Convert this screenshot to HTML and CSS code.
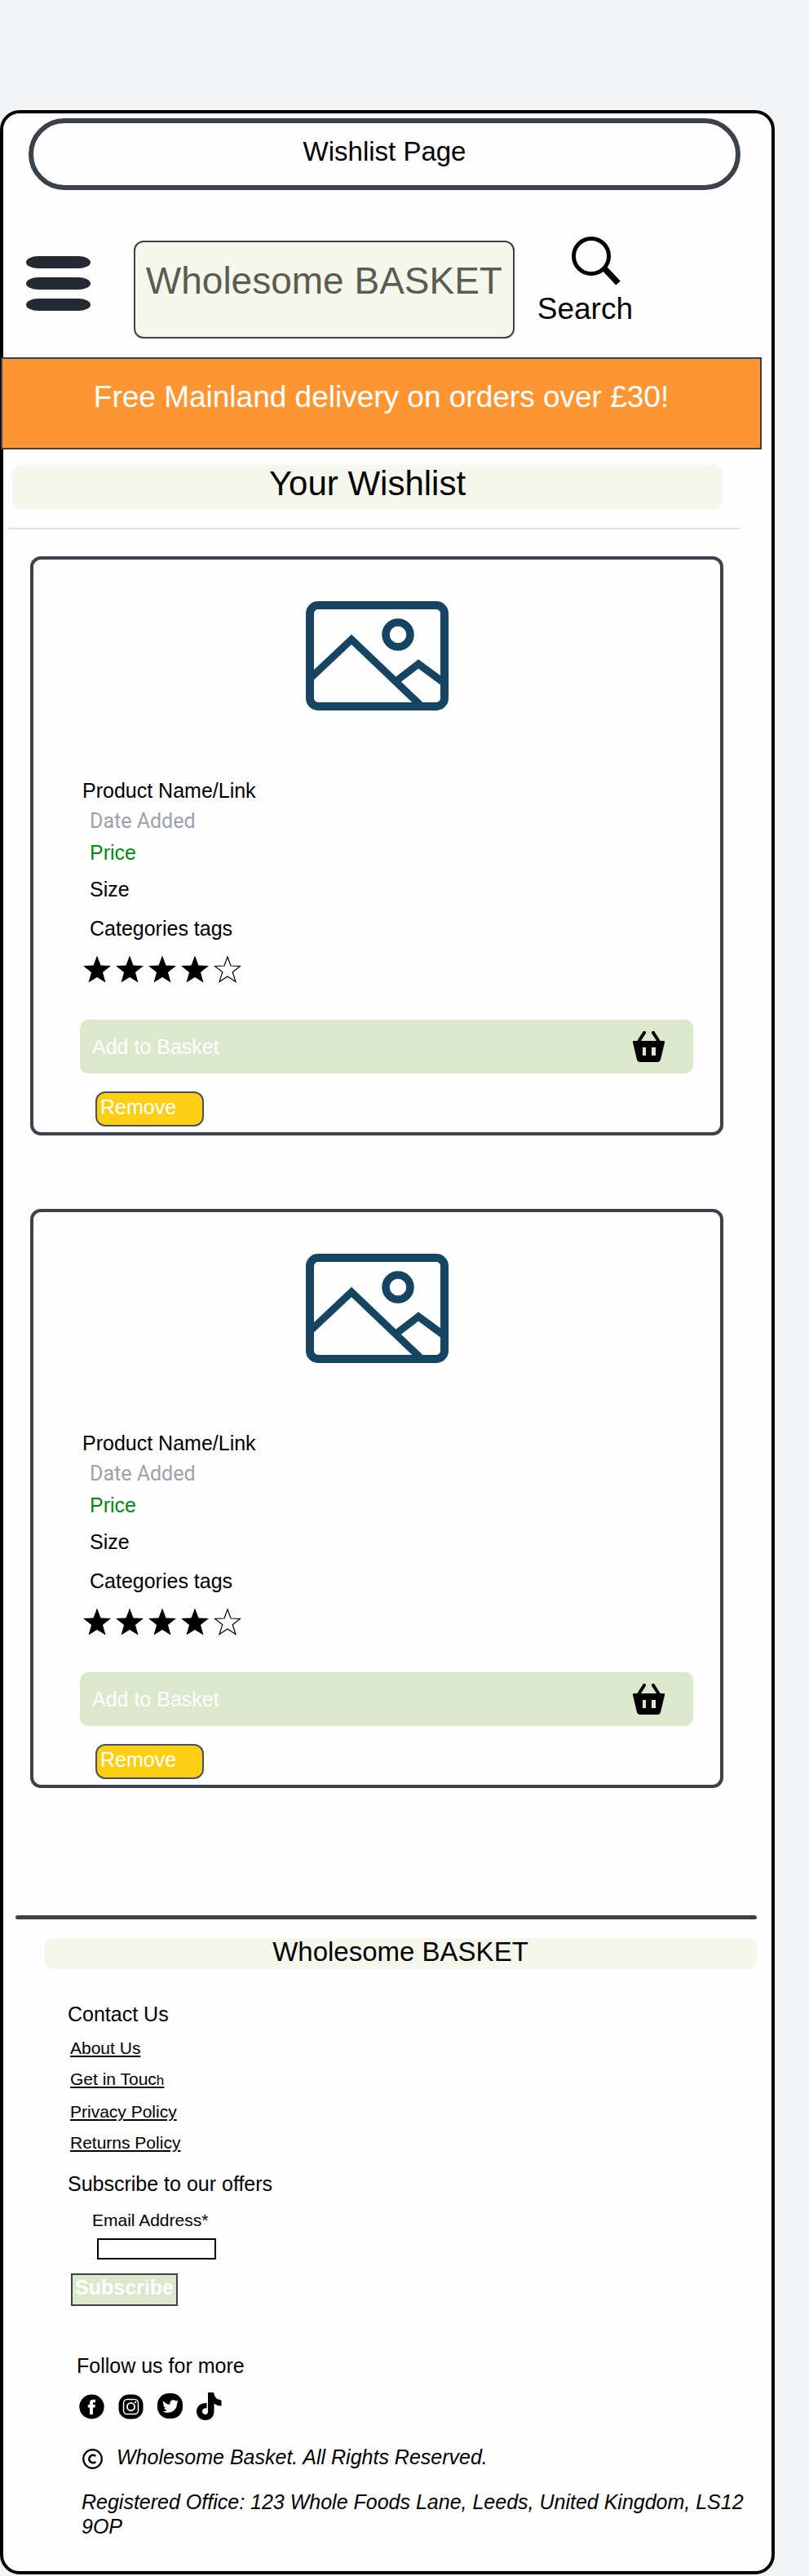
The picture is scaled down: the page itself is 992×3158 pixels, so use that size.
FILE: index.html
```html
<!DOCTYPE html>
<html lang="en">
<head>
  <meta charset="utf-8">
  <meta name="viewport" content="width=device-width, initial-scale=1">
  <title>Wishlist Page</title>
  <link rel="stylesheet" href="styles.css">
</head>
<body>
  <!-- Shared icon shapes -->
  <svg class="sprite" aria-hidden="true">
    <symbol id="icon-picture" viewBox="0 0 175 134">
      <g fill="none" stroke="#164563">
        <rect x="5" y="5" width="165" height="124" rx="10" stroke-width="10"/>
        <circle cx="113" cy="41" r="15" stroke-width="9.5"/>
        <path d="M6 94 56 47 140 127M112 97 138 77 168 99" stroke-width="9"/>
      </g>
    </symbol>
    <symbol id="icon-star" viewBox="0 0 34 33">
      <path d="M17 0 21.500 12 34 12.500 24 20.500 27.500 33 17 26.500 6.500 33 10 20.500 0 12.500 12.500 12Z"/>
    </symbol>
    <symbol id="icon-star-empty" viewBox="0 0 34 33">
      <path d="M17 1.500 21 12.500 32.500 13 23.200 20.200 27 32 17 25.500 7 32 10.800 20.200 1.500 13 13 12.500Z" fill="none" stroke="#000" stroke-width="1.200"/>
    </symbol>
    <symbol id="icon-basket" viewBox="0 0 39 38">
      <path d="M7 13 14 2M32 13 25 2" fill="none" stroke="#000" stroke-width="4" stroke-linecap="round"/>
      <path fill-rule="evenodd" d="M1 12H38Q39.500 12 39 14L34 35Q33 38 30 38H9Q6 38 5 35L0 14Q-.5 12 1 12ZM12 20V30H16V20ZM23 20V30H28V20Z"/>
    </symbol>
  </svg>

  <div class="frame">
    <h1 class="page-name">Wishlist Page</h1>

    <header class="header">
      <button class="menu" type="button" aria-label="Menu">
        <span class="menu-bar"></span>
        <span class="menu-bar"></span>
        <span class="menu-bar"></span>
      </button>
      <a class="brand" href="#">Wholesome BASKET</a>
      <button class="search" type="button">
        <svg class="search-icon" viewBox="0 0 62 62" aria-hidden="true">
          <circle cx="25" cy="25" r="21.500" fill="none" stroke="#000" stroke-width="5"/>
          <path d="M41 40 58 58" stroke="#000" stroke-width="7.500"/>
        </svg>
        <span>Search</span>
      </button>
    </header>

    <p class="banner">Free Mainland delivery on orders over £30!</p>

    <main>
      <h2 class="section-title">Your Wishlist</h2>
      <hr class="rule">

      <div class="cards">
        <article class="card">
          <svg class="picture" role="img" aria-label="Product picture"><use href="#icon-picture"/></svg>
          <a class="product" href="#">Product Name/Link</a>
          <p class="meta date">Date Added</p>
          <p class="meta price">Price</p>
          <p class="meta size">Size</p>
          <p class="meta tags">Categories tags</p>
          <div class="stars" role="img" aria-label="4 out of 5 stars">
            <svg class="star"><use href="#icon-star"/></svg>
            <svg class="star"><use href="#icon-star"/></svg>
            <svg class="star"><use href="#icon-star"/></svg>
            <svg class="star"><use href="#icon-star"/></svg>
            <svg class="star"><use href="#icon-star-empty"/></svg>
          </div>
          <button class="add" type="button">
            <span>Add to Basket</span>
            <svg class="basket" aria-hidden="true"><use href="#icon-basket"/></svg>
          </button>
          <button class="remove" type="button">Remove</button>
        </article>

        <article class="card">
          <svg class="picture" role="img" aria-label="Product picture"><use href="#icon-picture"/></svg>
          <a class="product" href="#">Product Name/Link</a>
          <p class="meta date">Date Added</p>
          <p class="meta price">Price</p>
          <p class="meta size">Size</p>
          <p class="meta tags">Categories tags</p>
          <div class="stars" role="img" aria-label="4 out of 5 stars">
            <svg class="star"><use href="#icon-star"/></svg>
            <svg class="star"><use href="#icon-star"/></svg>
            <svg class="star"><use href="#icon-star"/></svg>
            <svg class="star"><use href="#icon-star"/></svg>
            <svg class="star"><use href="#icon-star-empty"/></svg>
          </div>
          <button class="add" type="button">
            <span>Add to Basket</span>
            <svg class="basket" aria-hidden="true"><use href="#icon-basket"/></svg>
          </button>
          <button class="remove" type="button">Remove</button>
        </article>
      </div>
    </main>

    <footer class="footer">
      <hr class="footer-rule">
      <p class="footer-brand">Wholesome BASKET</p>

      <div class="footer-body">
        <h3 class="footer-heading">Contact Us</h3>
        <ul class="links">
          <li><a href="#">About Us</a></li>
          <li><a href="#">Get in Touc<span class="small-letter">h</span></a></li>
          <li><a href="#">Privacy Policy</a></li>
          <li><a href="#">Returns Policy</a></li>
        </ul>

        <form class="subscribe">
          <h3 class="footer-heading">Subscribe to our offers</h3>
          <label class="email-label" for="email">Email Address*</label>
          <input class="email" id="email" type="email">
          <button class="subscribe-button" type="button">Subscribe</button>
        </form>

        <div class="about">
          <h3 class="footer-heading">Follow us for more</h3>
          <div class="socials">
            <a href="#" aria-label="Facebook">
              <svg class="social" viewBox="0 0 31 34">
                <ellipse cx="15.500" cy="17.500" rx="15.200" ry="15"/>
                <path d="M13 27V18.500H10.800V15H13V13Q13 8.800 17 8.800H20V12.300H18.300Q17 12.300 17 13.600V15H19.900L19.400 18.500H17V27Z" fill="#fff"/>
              </svg>
            </a>
            <a href="#" aria-label="Instagram">
              <svg class="social" viewBox="0 0 31 34">
                <rect x=".5" y="2.500" width="30" height="30" rx="12.500"/>
                <g fill="none" stroke="#fff" stroke-width="1.500">
                  <rect x="6.500" y="8.500" width="18" height="18" rx="4.500"/>
                  <circle cx="15.500" cy="17.500" r="4.600" stroke-width="1.800"/>
                </g>
                <circle cx="21" cy="12" r="1.200" fill="#fff"/>
              </svg>
            </a>
            <a href="#" aria-label="Twitter">
              <svg class="social" viewBox="0 0 31 34">
                <rect y="1" width="31" height="31" rx="14"/>
                <path d="M7 10.500Q10.500 14.600 15.500 14.800C14.500 9.500 20 7.600 22.700 10.600L25.300 9.600 23.900 11.900 25.800 11.500 24 13.600C24.200 21 18 25.500 11 24.800Q8.500 24.500 6.500 23.300 9.800 23.400 11.800 21.700 9 21.300 8.300 19.200L10 19.100Q7.200 18 7.200 15.100L8.700 15.600Q6 13.500 7 10.500Z" fill="#fff"/>
              </svg>
            </a>
            <a href="#" aria-label="TikTok">
              <svg class="social" viewBox="0 0 31 34">
                <path d="M14 0H21Q22 8.500 30.500 9.500V16.500Q25 16.500 21.500 13.500V23C21.500 30 16.500 34 11 34 4.500 34 0 29.300 0 23.500 0 16.500 5.500 12.300 12.500 13V19.500C9.500 18.800 7 20.500 7 23.300 7 25.500 8.800 27 11 27 13 27 14 25.500 14 23.300Z"/>
              </svg>
            </a>
          </div>
          <div class="copyright">
            <svg class="copyright-icon" viewBox="0 0 25 25" role="img" aria-label="Copyright">
              <g fill="none" stroke="#000">
                <circle cx="12.500" cy="12.500" r="11.300" stroke-width="2.200"/>
                <path d="M16.200 9A4.700 4.700 0 1 0 16.200 16" stroke-width="2.600"/>
              </g>
            </svg>
            <span>Wholesome Basket. All Rights Reserved.</span>
          </div>
          <address class="address">Registered Office: 123 Whole Foods Lane, Leeds, United Kingdom, LS12 9OP</address>
        </div>
      </div>
    </footer>
  </div>
</body>
</html>
```

FILE: styles.css
```css
* {
  box-sizing: border-box;
}

body {
  margin: 0;
  padding: 135px 42px 0 0;
  background: #f1f3f5;
  color: #000;
  font-family: "Liberation Sans", Arial, sans-serif;
  font-size: 25px;
  line-height: 30px;
}

h1, h2, h3, p, ul {
  margin: 0;
  padding: 0;
  font-weight: 400;
}

a {
  color: inherit;
  text-decoration: none;
}

button {
  font: inherit;
  color: inherit;
  border: 0;
  background: none;
  padding: 0;
  text-align: left;
  cursor: pointer;
}

svg {
  display: block;
}

.sprite {
  position: absolute;
  width: 0;
  height: 0;
}

.frame {
  border: 4px solid #000;
  border-radius: 24px;
  background: #fefefe;
}

.page-name {
  margin: 6px 38px 0 31px;
  padding: 15px 0 21px;
  border: 6px solid #3b424c;
  border-radius: 44px;
  font-size: 33px;
  line-height: 40px;
  text-align: center;
}

/* Header */
.header {
  display: flex;
  align-items: flex-start;
  padding: 56px 170px 23px 28px;
}

.menu {
  display: flex;
  flex-direction: column;
  gap: 11px;
  width: 79px;
  margin: 25px 53px 0 0;
}

.menu-bar {
  height: 15px;
  border-radius: 16px / 8px;
  background: #252a32;
}

.brand {
  flex: 1;
  margin: 6px 28px 0 0;
  padding: 20px 0 42px;
  border: 2px solid #3b424c;
  border-radius: 12px;
  background: #f5f7ed;
  color: #5a5c50;
  font-size: 46px;
  line-height: 54px;
  text-align: center;
}

.search {
  display: flex;
  flex-direction: column;
  gap: 6px;
  font-size: 37px;
  line-height: 44px;
}

.search-icon {
  width: 62px;
  height: 62px;
  margin-left: 41px;
}

.banner {
  margin: 0 12px 0 -3px;
  padding: 25px 0 40px;
  border: 2px solid #3b424c;
  background: #fd9632;
  color: #fff;
  font-size: 37px;
  line-height: 44px;
  text-align: center;
}

/* Wishlist */
.section-title {
  margin: 19px 60px 0 11px;
  padding: 1px 0 10px;
  border-radius: 12px;
  background: #f5f7ed;
  font-size: 42px;
  line-height: 44px;
  text-align: center;
}

.rule {
  height: 2px;
  margin: 22px 39px 33px 6px;
  border: 0;
  background: #dde1e6;
}

.cards {
  display: flex;
  flex-direction: column;
  gap: 90px;
  margin: 0 59px 0 33px;
}

.card {
  display: flex;
  flex-direction: column;
  align-items: flex-start;
  padding: 51px 33px 7px 57px;
  border: 4px solid #3b424c;
  border-radius: 13px;
}

.picture {
  align-self: center;
  width: 175px;
  height: 134px;
  margin: 0 24px 83px 0;
}

.product {
  margin-left: 3px;
}

.meta {
  margin-left: 12px;
}

.date {
  margin-top: 8px;
  color: #9aa1ad;
  font-family: Roboto, "Liberation Sans", sans-serif;
}

.price {
  margin-top: 8px;
  color: #008a0e;
}

.size {
  margin-top: 15px;
}

.tags {
  margin-top: 18px;
}

.stars {
  display: flex;
  gap: 6px;
  margin: 18px 0 45px 4px;
}

.star {
  width: 34px;
  height: 34px;
}

.add {
  display: flex;
  align-items: center;
  justify-content: space-between;
  align-self: stretch;
  padding: 18px 35px 18px 15px;
  border-radius: 10px;
  background: #dbe8cc;
  color: #fff;
}

.basket {
  width: 39px;
  height: 38px;
  margin: -4px 0;
}

.remove {
  width: 133px;
  margin: 22px 0 0 19px;
  padding: 2px 4px 7px;
  border: 2px solid #4a515b;
  border-radius: 12px;
  background: #fccf14;
  color: #fff;
}

/* Footer */
.footer {
  padding: 156px 18px 40px 0;
}

.footer-rule {
  height: 5px;
  margin: 0 0 23px 15px;
  border: 0;
  border-radius: 3px;
  background: #3b424c;
}

.footer-brand {
  margin-left: 50px;
  padding-bottom: 4px;
  border-radius: 12px;
  background: #f5f7ed;
  font-size: 33px;
  line-height: 34px;
  text-align: center;
}

.footer-body {
  padding: 40px 0 0 79px;
}

.footer-heading {
  font-size: 25px;
}

.links {
  display: flex;
  flex-direction: column;
  gap: 14px;
  margin: 15px 0 23px 3px;
  font-size: 21px;
  line-height: 24px;
  list-style: none;
}

.links a {
  text-decoration: underline;
}

.small-letter {
  font-size: 17px;
}

.subscribe {
  display: flex;
  flex-direction: column;
  align-items: flex-start;
}

.email-label {
  margin: 18px 0 10px 30px;
  font-size: 21px;
  line-height: 24px;
}

.email {
  width: 146px;
  height: 26px;
  margin-left: 36px;
  padding: 0 4px;
  border: 2px solid #000;
  border-radius: 0;
  background: #fff;
  font: inherit;
  font-size: 17px;
}

.subscribe-button {
  width: 131px;
  margin: 17px 0 58px 4px;
  padding-bottom: 6px;
  border: 2px solid #3b424c;
  background: #dbe8cc;
  color: #fff;
  font-weight: 700;
  text-align: center;
}

.about {
  padding-left: 11px;
}

.socials {
  display: flex;
  gap: 17px;
  margin: 18px 0 30px 3px;
}

.social {
  width: 31px;
  height: 34px;
}

.copyright {
  display: flex;
  align-items: flex-end;
  gap: 17px;
  margin-left: 7px;
  font-style: italic;
}

.copyright-icon {
  width: 25px;
  height: 25px;
}

.address {
  margin: 25px 0 0 6px;
  font-style: italic;
}
```
